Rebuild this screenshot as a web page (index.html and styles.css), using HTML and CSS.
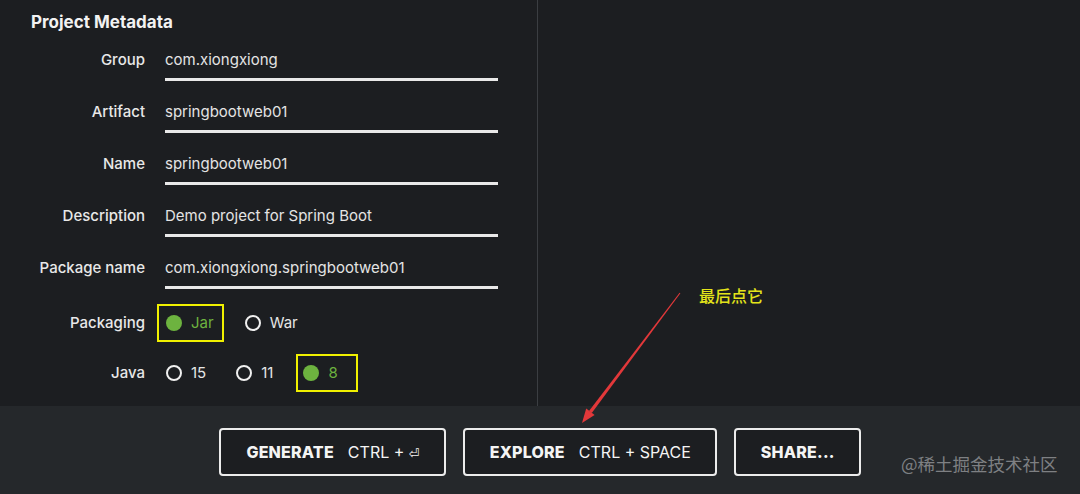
FILE: index.html
```html
<!DOCTYPE html>
<html lang="en">
<head>
<meta charset="utf-8">
<title>Project Metadata</title>
<link rel="stylesheet" href="styles.css">
</head>
<body>
<div class="page">
  <div class="main">
    <section class="left">
      <h2 class="title">Project Metadata</h2>
      <div class="row">
        <label class="label">Group</label>
        <div class="input">com.xiongxiong</div>
      </div>
      <div class="row">
        <label class="label">Artifact</label>
        <div class="input">springbootweb01</div>
      </div>
      <div class="row">
        <label class="label">Name</label>
        <div class="input">springbootweb01</div>
      </div>
      <div class="row">
        <label class="label">Description</label>
        <div class="input">Demo project for Spring Boot</div>
      </div>
      <div class="row">
        <label class="label">Package name</label>
        <div class="input">com.xiongxiong.springbootweb01</div>
      </div>
      <div class="radio-row">
        <label class="label">Packaging</label>
        <div class="radios">
          <span class="radio checked"><span class="dot"></span>Jar<span class="mark mark-jar"></span></span>
          <span class="radio"><span class="dot"></span>War</span>
        </div>
      </div>
      <div class="radio-row java">
        <label class="label">Java</label>
        <div class="radios">
          <span class="radio"><span class="dot"></span>15</span>
          <span class="radio"><span class="dot"></span>11</span>
          <span class="radio checked"><span class="dot"></span>8<span class="mark mark-8"></span></span>
        </div>
      </div>
    </section>
    <div class="divider"></div>
    <section class="right"></section>
  </div>
  <div class="actions">
    <button class="btn"><b>GENERATE</b><span class="key">CTRL + <span class="ret">⏎</span></span></button>
    <button class="btn"><b>EXPLORE</b><span class="key">CTRL + SPACE</span></button>
    <button class="btn"><b>SHARE...</b></button>
  </div>

  <div class="note">最后点它</div>
  <svg class="arrow" width="1080" height="494" viewBox="0 0 1080 494">
    <polygon points="680.4,293.3 679.6,292.7 589.0,411.0 591.8,413.0" fill="#e2383a"/>
    <polygon points="582,423 586.2,408.6 594.6,414.9" fill="#e2383a"/>
  </svg>
  <div class="watermark">@稀土掘金技术社区</div>
</div>
</body>
</html>
```
FILE: styles.css
```css
* { box-sizing: border-box; }
html, body {
  margin: 0;
  padding: 0;
  background: #1c1e21;
}
body {
  font-family: Inter, "Noto Sans", "Noto Sans CJK SC", sans-serif;
  color: #e6e6e6;
}
.page {
  position: relative;
  width: 1080px;
  height: 494px;
  overflow: hidden;
  display: flex;
  flex-direction: column;
}
.main {
  height: 406px;
  display: flex;
  background: #1c1e21;
}
.left {
  width: 537px;
  padding: 10px 0 0 31px;
}
.divider {
  width: 1px;
  background: #3b3e42;
}
.right { flex: 1; }

.title {
  margin: 0 0 16px 0;
  font-size: 17px;
  line-height: 24px;
  font-weight: 700;
  color: #f2f2f2;
}
.row {
  display: flex;
  align-items: flex-start;
  margin-bottom: 21px;
}
.label {
  width: 114px;
  text-align: right;
  font-size: 15px;
  line-height: 20px;
  font-weight: 500;
  color: #e8e8e8;
  flex: none;
}
.input {
  margin-left: 20px;
  width: 333px;
  font-size: 15px;
  line-height: 20px;
  color: #e4e4e4;
  padding-bottom: 8px;
  border-bottom: 3px solid #e9e9e9;
}
.radio-row {
  display: flex;
  align-items: center;
  height: 38px;
  margin-top: -6px;
}
.radio-row.java {
  margin-top: 12px;
}
.radios {
  display: flex;
  align-items: center;
  margin-left: 21px;
  gap: 31px;
}
.java .radios { gap: 30px; }
.radio {
  position: relative;
  display: inline-flex;
  align-items: center;
  gap: 9px;
  font-size: 15px;
  line-height: 20px;
  color: #e6e6e6;
}
.dot {
  width: 16px;
  height: 16px;
  border-radius: 50%;
  border: 2px solid #f0f0f0;
  flex: none;
}
.radio.checked { color: #6db33f; }
.radio.checked .dot {
  border: none;
  background: #6db33f;
}
.mark {
  position: absolute;
  border: 2px solid #f0f000;
  pointer-events: none;
}
.mark-jar { left: -9px; right: -10px; top: -9px; bottom: -9px; }
.mark-8 { left: -7px; right: -20px; top: -9px; bottom: -9px; }

.actions {
  flex: 1;
  background: #25282b;
  display: flex;
  justify-content: center;
  align-items: flex-start;
  gap: 17px;
  padding-top: 22px;
}
.btn {
  height: 48px;
  padding: 0 24px 0 25px;
  background: #1c1e21;
  border: 2px solid #ececec;
  border-radius: 4px;
  color: #f4f4f4;
  font-family: Inter, "Noto Sans", sans-serif;
  font-size: 16px;
  display: flex;
  align-items: center;
  gap: 14px;
}
.btn b {
  font-weight: 800;
  letter-spacing: 0.2px;
}
.key {
  font-weight: 400;
}
.ret {
  font-family: "DejaVu Sans", sans-serif;
  font-size: 13px;
}

.note {
  position: absolute;
  left: 699px;
  top: 284px;
  font-family: "Noto Sans CJK SC", sans-serif;
  font-size: 16px;
  line-height: 22px;
  font-weight: 500;
  color: #e4e41a;
}
.arrow {
  position: absolute;
  left: 0;
  top: 0;
  pointer-events: none;
}
.watermark {
  position: absolute;
  left: 901px;
  top: 452px;
  font-family: "Noto Sans CJK SC", sans-serif;
  font-size: 17.5px;
  line-height: 24px;
  color: #7e8083;
}
```
